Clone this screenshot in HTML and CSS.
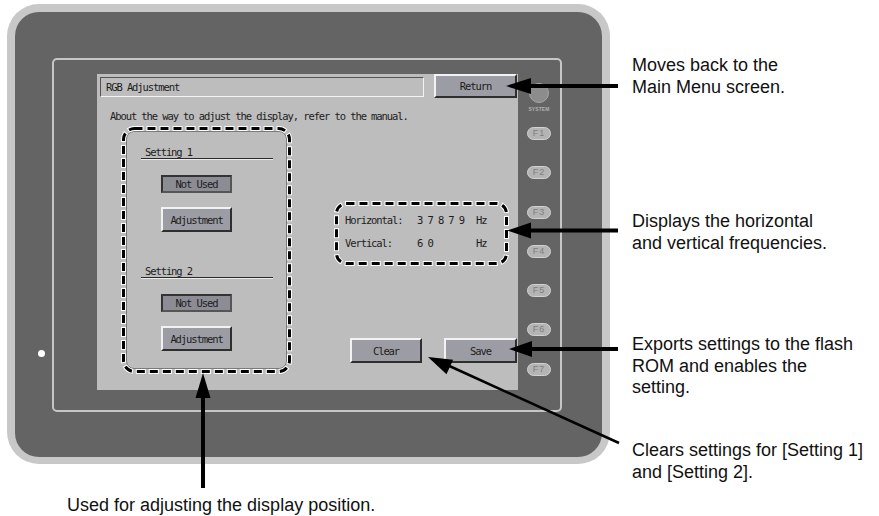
FILE: index.html
```html
<!DOCTYPE html>
<html>
<head>
<meta charset="utf-8">
<link rel="stylesheet" href="styles.css">
</head>
<body>
<div class="figure">
  <div class="device">
    <div class="bezel">
      <span class="led"></span>
      <div class="frame">
        <div class="screen">
          <div class="topbar">
            <div class="title">RGB Adjustment</div>
            <div class="btn return">Return</div>
          </div>
          <div class="note">About the way to adjust the display, refer to the manual.</div>
          <div class="body">
            <div class="group">
              <div class="panel">
                <div class="heading">Setting 1</div>
                <div class="btn sunk">Not Used</div>
                <div class="btn adj">Adjustment</div>
                <div class="heading second">Setting 2</div>
                <div class="btn sunk">Not Used</div>
                <div class="btn adj">Adjustment</div>
              </div>
              <svg class="dash" viewBox="0 0 169 246">
                <rect class="halo" x="1.5" y="1.5" width="166" height="243" rx="11"/>
                <rect class="ink" x="1.5" y="1.5" width="166" height="243" rx="11"/>
              </svg>
            </div>
            <div class="side">
              <div class="freq">
                <span>Horizontal:</span><span>3 7 8 7 9</span><span>Hz</span>
                <span>Vertical:</span><span>6 0</span><span>Hz</span>
                <svg class="dash" viewBox="0 0 173 63">
                  <rect class="halo" x="1.5" y="1.5" width="170" height="60" rx="10"/>
                  <rect class="ink" x="1.5" y="1.5" width="170" height="60" rx="10"/>
                </svg>
              </div>
              <div class="actions">
                <div class="btn clear">Clear</div>
                <div class="btn save">Save</div>
              </div>
            </div>
          </div>
        </div>
        <div class="keys">
          <div class="sys"></div>
          <div class="sys-label">SYSTEM</div>
          <div class="fkeys">
            <div class="fkey">F1</div>
            <div class="fkey">F2</div>
            <div class="fkey">F3</div>
            <div class="fkey">F4</div>
            <div class="fkey">F5</div>
            <div class="fkey">F6</div>
            <div class="fkey">F7</div>
          </div>
        </div>
      </div>
    </div>
  </div>

  <p class="callout c1">Moves back to the<br>Main Menu screen.</p>
  <p class="callout c2">Displays the horizontal<br>and vertical frequencies.</p>
  <p class="callout c3">Exports settings to the flash<br>ROM and enables the<br>setting.</p>
  <p class="callout c4">Clears settings for [Setting 1]<br>and [Setting 2].</p>
  <p class="callout caption">Used for adjusting the display position.</p>

  <svg class="arrows" viewBox="0 0 879 516">
    <line x1="528" y1="86" x2="618" y2="86" stroke-width="4"/>
    <polygon points="506,86 531,78 531,94"/>
    <line x1="528" y1="230.5" x2="618" y2="230.5" stroke-width="4"/>
    <polygon points="507,230.5 531,222.5 531,238.5"/>
    <line x1="528" y1="349" x2="618" y2="349" stroke-width="4"/>
    <polygon points="509,349 532,341 532,357"/>
    <line x1="619" y1="443" x2="445" y2="364" stroke-width="2.5"/>
    <polygon points="428,357 453.1,359.7 446.5,374.3"/>
    <line x1="203" y1="394" x2="203" y2="488" stroke-width="4"/>
    <polygon points="203,373 195.5,398 210.5,398"/>
  </svg>
</div>
</body>
</html>
```

FILE: styles.css
```css
body {
  margin: 0;
  background: #ffffff;
}

.figure {
  position: relative;
  width: 879px;
  height: 516px;
  overflow: hidden;
  box-sizing: border-box;
  padding: 4px 0 0 7px;
  font-family: "Liberation Sans", Arial, sans-serif;
}

.device {
  width: 603px;
  height: 460px;
  box-sizing: border-box;
  padding: 8px 8px 7px 8px;
  background: #c8c8c8;
  border-radius: 32px;
}

.bezel {
  position: relative;
  height: 100%;
  box-sizing: border-box;
  background: #646464;
  border-radius: 24px;
  padding: 46px 40px 45px 37px;
}

.led {
  position: absolute;
  left: 22.5px;
  top: 337.5px;
  width: 7px;
  height: 7px;
  border-radius: 50%;
  background: #ffffff;
}

.frame {
  height: 100%;
  box-sizing: border-box;
  border: 2px solid #c6c6c6;
  border-radius: 5px;
  padding: 14px 0 0 43px;
  display: flex;
}

/* ---------- HMI screen ---------- */
.screen {
  flex: none;
  width: 421px;
  height: 316px;
  background: #bdbdbd;
  font-family: "DejaVu Sans Mono", monospace;
  font-size: 10.5px;
  letter-spacing: -1.1px;
  color: #1c1c1c;
}

.topbar {
  display: flex;
  align-items: flex-start;
}

.title {
  margin: 3px 0 0 3px;
  width: 324px;
  height: 20px;
  box-sizing: border-box;
  border: 1px solid;
  border-color: #555555 #f4f4f4 #f4f4f4 #555555;
  padding-left: 5px;
  line-height: 18px;
}

.btn {
  box-sizing: border-box;
  background: #9c9ca4;
  border: 2px solid;
  border-color: #f2f2f2 #2e2e2e #2e2e2e #f2f2f2;
  display: flex;
  align-items: center;
  justify-content: center;
}

.return {
  margin-left: 10px;
  width: 83px;
  height: 24px;
}

.note {
  margin: 12px 0 0 13px;
  line-height: 12px;
  white-space: nowrap;
}

.body {
  display: flex;
  margin-top: 5px;
}

.group {
  position: relative;
  flex: none;
  width: 169px;
  height: 246px;
  margin-left: 25px;
  box-sizing: border-box;
  padding: 4px;
}

.panel {
  height: 100%;
  box-sizing: border-box;
  border: 1px solid #7a7a7a;
  border-radius: 8px;
  display: flex;
  flex-direction: column;
  align-items: flex-start;
}

.heading {
  margin: 14px 0 0 14px;
  width: 132px;
  height: 13px;
  box-sizing: border-box;
  line-height: 12px;
  padding-left: 4px;
  border-bottom: 1px solid #2a2a2a;
  box-shadow: 0 1px 0 #ececec;
}

.heading.second {
  margin-top: 33px;
}

.sunk {
  margin: 16px 0 0 34px;
  width: 71px;
  height: 18px;
  background: #8c8c94;
  border-color: #333333 #555555 #555555 #333333;
}

.adj {
  margin: 14px 0 0 34px;
  width: 71px;
  height: 25px;
}

.dash {
  position: absolute;
  left: 0;
  top: 0;
  width: 100%;
  height: 100%;
  overflow: visible;
}

.dash rect {
  fill: none;
}

.dash .halo {
  stroke: #ffffff;
  stroke-width: 5;
  stroke-dasharray: 10 3;
  stroke-dashoffset: 1;
}

.dash .ink {
  stroke: #000000;
  stroke-width: 3;
  stroke-dasharray: 8 5;
}

.side {
  margin-left: 44px;
  padding-top: 75px;
  width: 183px;
}

.freq {
  position: relative;
  width: 173px;
  height: 63px;
  box-sizing: border-box;
  padding: 12px 0 0 10px;
  display: grid;
  grid-template-columns: 72px 59px auto;
  grid-auto-rows: 12px;
  row-gap: 11px;
  line-height: 12px;
  white-space: nowrap;
}

.actions {
  display: flex;
  margin-top: 73px;
}

.clear {
  margin-left: 15px;
  width: 72px;
  height: 25px;
}

.save {
  margin-left: 22px;
  width: 73px;
  height: 25px;
}

/* ---------- side keys ---------- */
.keys {
  flex: 1;
  display: flex;
  flex-direction: column;
  align-items: center;
  padding-top: 9px;
}

.sys {
  width: 20px;
  height: 20px;
  box-sizing: border-box;
  border-radius: 50%;
  background: #8c8c8c;
  border: 1px solid #a6a6a6;
}

.sys-label {
  margin-top: 3px;
  font-size: 5px;
  font-weight: bold;
  line-height: 6px;
  letter-spacing: 0.1px;
  color: #b0b0b0;
}

.fkeys {
  display: flex;
  flex-direction: column;
  gap: 26.3px;
  margin-top: 15px;
}

.fkey {
  width: 24px;
  height: 13px;
  box-sizing: border-box;
  border-radius: 7px;
  background: #b4b4b4;
  border: 1px solid #d2d2d2;
  font-size: 9px;
  line-height: 11px;
  letter-spacing: 1px;
  color: #7e7e7e;
  display: flex;
  align-items: center;
  justify-content: center;
}

/* ---------- annotations ---------- */
.callout {
  position: absolute;
  margin: 0;
  left: 632px;
  font-size: 18px;
  line-height: 21.6px;
  color: #111111;
  white-space: nowrap;
}

.c1 { top: 55px; }
.c2 { top: 211px; }
.c3 { top: 334px; }
.c4 { top: 440px; }
.caption { left: 67px; top: 495px; }

.arrows {
  position: absolute;
  left: 0;
  top: 0;
  width: 879px;
  height: 516px;
  pointer-events: none;
}

.arrows line {
  stroke: #000000;
}

.arrows polygon {
  fill: #000000;
}
```
